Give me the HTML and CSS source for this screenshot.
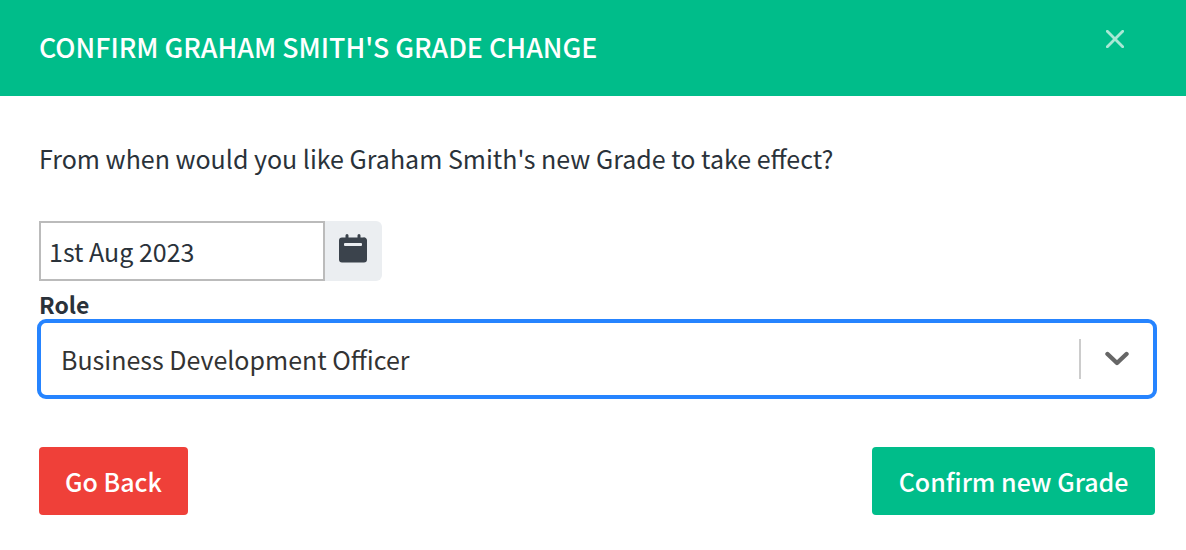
FILE: index.html
```html
<!DOCTYPE html>
<html lang="en">
<head>
<meta charset="utf-8">
<title>Confirm grade change</title>
<link rel="stylesheet" href="styles.css">
</head>
<body>
<div class="modal">
  <header class="modal-header">
    <h1 class="modal-title">CONFIRM GRAHAM SMITH'S GRADE CHANGE</h1>
    <button class="close" aria-label="Close">
      <svg width="18" height="18" viewBox="0 0 18 18"><path d="M1.300 1.300 16.700 16.700M16.700 1.300 1.300 16.700" stroke="currentColor" stroke-width="2.800" stroke-linecap="round"/></svg>
    </button>
  </header>
  <main class="modal-body">
    <p class="question">From when would you like Graham Smith's new Grade to take effect?</p>
    <div class="date-group">
      <div class="date-input">1st Aug 2023</div>
      <div class="date-addon">
        <svg width="30" height="30" viewBox="0 0 30 30"><path fill-rule="evenodd" fill="#3b434c" d="M9 1a1.500 1.500 0 0 1 1.500 1.500V4.500h9V2.500a1.500 1.500 0 0 1 3 0v2h2.500A3 3 0 0 1 29 7.500v19a3 3 0 0 1-3 3H4a3 3 0 0 1-3-3v-19a3 3 0 0 1 3-3h3.500V2.500A1.500 1.500 0 0 1 9 1ZM7 10a1 1 0 0 0-1 1v1a1 1 0 0 0 1 1h16a1 1 0 0 0 1-1v-1a1 1 0 0 0-1-1Z"/></svg>
      </div>
    </div>
    <label class="role-label">Role</label>
    <div class="select">
      <span class="select-value">Business Development Officer</span>
      <span class="select-sep"></span>
      <span class="select-arrow">
        <svg width="24" height="16" viewBox="0 0 24 16"><path d="M2.500 3 12 12 21.500 3" fill="none" stroke="#666" stroke-width="4.400" stroke-linecap="round" stroke-linejoin="round"/></svg>
      </span>
    </div>
    <div class="actions">
      <button class="btn btn-red">Go Back</button>
      <button class="btn btn-green">Confirm new Grade</button>
    </div>
  </main>
</div>
</body>
</html>
```
FILE: styles.css
```css
* { box-sizing: border-box; }
html, body { margin: 0; padding: 0; background: #fff; }
body {
  font-family: "Noto Sans CJK SC", "Noto Sans", sans-serif;
  color: #2a323a;
  width: 1186px;
  height: 550px;
  overflow: hidden;
}
.modal-header {
  height: 96px;
  background: #00bd8a;
  display: flex;
  align-items: center;
  justify-content: space-between;
  padding: 0 61px 0 39px;
}
.modal-title {
  margin: 0 0 2px;
  color: #fff;
  font-size: 26.8px;
  font-weight: 500;
  line-height: 32px;
}
.close {
  border: 0;
  background: none;
  padding: 0;
  color: #a9e8d5;
  display: flex;
  margin-bottom: 18px;
  width: 19px;
  height: 18px;
}
.modal-body { padding: 0 31px 0 39px; }
.question {
  margin: 0;
  padding: 44px 0 0;
  font-size: 25px;
  line-height: 36px;
}
.date-group {
  display: flex;
  margin-top: 45px;
  height: 60px;
}
.date-input {
  width: 286px;
  border: 2px solid #bbb;
  padding-left: 8px;
  font-size: 25px;
  line-height: 56px;
}
.date-addon {
  width: 57px;
  background: #ebeef1;
  border-radius: 0 6px 6px 0;
  display: flex;
  align-items: flex-start;
  justify-content: center;
  padding-top: 12px;
  padding-right: 2px;
}
.role-label {
  display: block;
  font-size: 23px;
  font-weight: 700;
  line-height: 38px;
  height: 38px;
  margin-top: 4px;
  margin-bottom: -4px;
}
.select {
  height: 80px;
  margin: 0 -2px;
  border: 4px solid #2684ff;
  border-radius: 9px;
  display: flex;
  align-items: center;
  padding-left: 20px;
}
.select-value {
  flex: 1;
  font-size: 25px;
  color: #333;
  padding-bottom: 1px;
}
.select-sep {
  width: 2px;
  height: 40px;
  background: #ccc;
}
.select-arrow {
  width: 72px;
  display: flex;
  justify-content: center;
}
.actions {
  display: flex;
  justify-content: space-between;
  margin-top: 48px;
}
.btn {
  height: 68px;
  border: 0;
  border-radius: 4px;
  color: #fff;
  font-family: inherit;
  font-size: 25px;
  font-weight: 500;
  padding: 0 26px;
}
.btn-red { background: #ef4039; }
.btn-green { background: #00bd8a; padding: 0 26.5px; }
```
